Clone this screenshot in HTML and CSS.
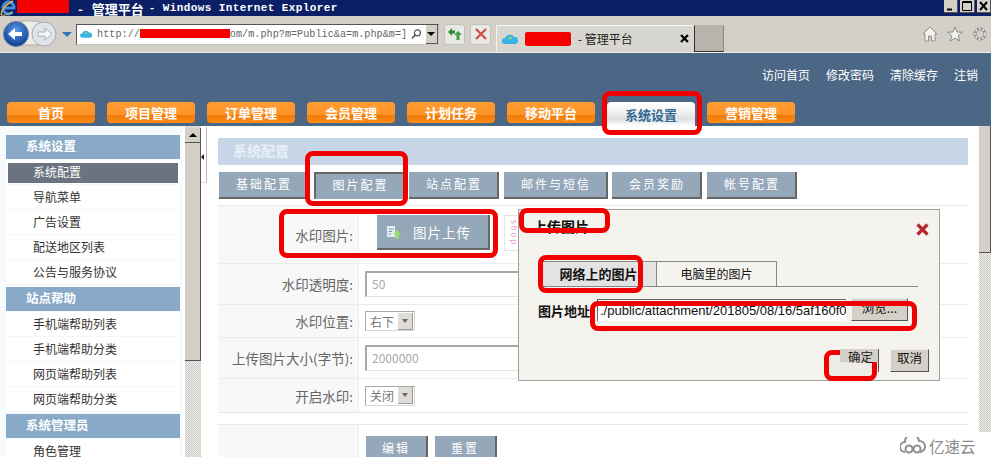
FILE: index.html
```html
<!DOCTYPE html>
<html lang="zh">
<head>
    <meta charset="UTF-8">
    <title>管理平台 - Windows Internet Explorer</title>
    <link rel="stylesheet" href="styles.css">
</head>
<body>
    <div class="titlebar">
        <svg class="ie-logo" width="17" height="16" viewBox="0 0 17 16">
            <path d="M3.5 8 H14 A5.5 6 0 1 0 12.5 12" fill="none" stroke="#3f8fdc" stroke-width="3"/>
            <path d="M1 15 C1 10 6 4 13 1" fill="none" stroke="#e8b23a" stroke-width="1.4"/>
            <path d="M1 15 C4 16 9 14 13 12" fill="none" stroke="#e8c35a"/>
        </svg>
        <span class="redact redact-title"></span>
        <span class="title-cn">-   管理平台</span>
        <span class="title-en">- Windows Internet Explorer</span>
        <div class="win-buttons">
            <span class="win-btn">
                <svg width="13" height="12" viewBox="0 0 13 12"><path d="M3 9.5 H8" stroke="#000" stroke-width="2"/></svg>
            </span>
            <span class="win-btn">
                <svg width="14" height="12" viewBox="0 0 14 12"><path d="M2.5 1.5 H11.5 V10.5 H2.5 Z M2.5 2.5 H11.5" fill="none" stroke="#000"/></svg>
            </span>
            <span class="win-btn">
                <svg width="13" height="12" viewBox="0 0 13 12"><path d="M3 2 L10 10 M10 2 L3 10" stroke="#000" stroke-width="2"/></svg>
            </span>
        </div>
    </div>

    <div class="toolbar">
        <svg class="nav-circles" width="72" height="28" viewBox="0 0 72 28">
            <defs>
                <radialGradient id="backFill" cx="50%" cy="35%" r="65%">
                    <stop offset="0" stop-color="#5b9be8"/>
                    <stop offset="1" stop-color="#0c3a95"/>
                </radialGradient>
            </defs>
            <path d="M14 3 C24 -1 34 1 42 3 L42 25 L14 25 Z" fill="#ecebe6" stroke="#a9a9a9"/>
            <circle cx="14" cy="14" r="12.5" fill="url(#backFill)" stroke="#6d7f95"/>
            <path d="M20 12 H13 V8 L6 14 L13 20 V16 H20 Z" fill="#fff"/>
            <circle cx="42" cy="14" r="12" fill="#dfe3ea" stroke="#a4a9b3"/>
            <path d="M36 12 H43 V8 L50 14 L43 20 V16 H36 Z" fill="#f6f7f9" stroke="#9aa3b2" stroke-width=".8"/>
            <path d="M60 12 H70 L65 17 Z" fill="#2f78b8"/>
        </svg>
        <div class="addressbar">
            <svg class="cloud" width="16" height="12" viewBox="0 0 16 12">
                <path d="M3 11 A3 3 0 0 1 3 5 A5 5 0 0 1 12 4 A3.5 3.5 0 0 1 13 11 Z" fill="#35b4e6"/>
                <path d="M6 6 L8 3 L10 6 Z" fill="#b7d63c"/>
            </svg>
            <span class="url">http://<span class="redact redact-url"></span>om/m.php?m=Public&amp;a=m.php&amp;m=]</span>
            <svg class="lens" width="14" height="14" viewBox="0 0 14 14">
                <circle cx="8.5" cy="5.5" r="4" fill="none" stroke="#555" stroke-width="1.6"/>
                <path d="M5.5 8.5 L1.5 12.5" stroke="#555" stroke-width="2"/>
            </svg>
            <span class="drop-btn"><span class="arrow-down"></span></span>
        </div>
        <span class="tool-btn">
            <svg width="16" height="14" viewBox="0 0 16 14">
                <path d="M1 5 L5 1 L5 3.5 L8 3.5 L8 6.5 L5 6.5 L5 9 Z" fill="#2f8a3a"/>
                <path d="M15 8 L11 4 L7 8 H9.5 V13 H12.5 V8 Z" fill="#3da046"/>
            </svg>
        </span>
        <span class="tool-btn">
            <svg width="12" height="12" viewBox="0 0 12 12">
                <path d="M1 1 L11 11 M11 1 L1 11" stroke="#c9504a" stroke-width="2.2"/>
            </svg>
        </span>
        <div class="tab">
            <svg width="16" height="12" viewBox="0 0 16 12">
                <path d="M3 11 A3 3 0 0 1 3 5 A5 5 0 0 1 12 4 A3.5 3.5 0 0 1 13 11 Z" fill="#35b4e6"/>
                <path d="M6 6 L8 3 L10 6 Z" fill="#b7d63c"/>
            </svg>
            <span class="redact redact-tab"></span>
            <span class="tab-title">- 管理平台</span>
            <svg class="tab-close" width="9" height="9" viewBox="0 0 9 9">
                <path d="M1 1 L8 8 M8 1 L1 8" stroke="#000" stroke-width="2.2"/>
            </svg>
        </div>
        <span class="new-tab"></span>
        <div class="tool-icons">
            <svg width="16" height="16" viewBox="0 0 16 16">
                <path d="M8 1 L15 8 H13 V15 H9.5 V10 H6.5 V15 H3 V8 H1 Z" fill="#f3f3f0" stroke="#8c8c88"/>
            </svg>
            <svg width="16" height="16" viewBox="0 0 16 16">
                <path d="M8 1 L10 6 L15.5 6.2 L11.2 9.5 L12.7 15 L8 12 L3.3 15 L4.8 9.5 L.5 6.2 L6 6 Z" fill="#f3f3f0" stroke="#8c8c88"/>
            </svg>
            <svg width="16" height="16" viewBox="0 0 16 16">
                <circle cx="8" cy="8" r="5" fill="none" stroke="#8c8c88" stroke-width="3"/>
                <circle cx="8" cy="8" r="5" fill="none" stroke="#f3f3f0" stroke-width="1.4" stroke-dasharray="2 1.6"/>
            </svg>
        </div>
    </div>

    <header class="app-header">
        <div class="top-links">
            <a>访问首页</a>
            <a>修改密码</a>
            <a>清除缓存</a>
            <a>注销</a>
        </div>
        <nav class="main-nav">
            <a class="nav-item">首页</a>
            <a class="nav-item">项目管理</a>
            <a class="nav-item">订单管理</a>
            <a class="nav-item">会员管理</a>
            <a class="nav-item">计划任务</a>
            <a class="nav-item">移动平台</a>
            <a class="nav-item nav-active">系统设置</a>
            <a class="nav-item">营销管理</a>
        </nav>
    </header>

    <div class="main">
        <aside class="sidebar">
            <div class="side-head">系统设置</div>
            <ul class="side-list">
                <li class="side-active"><span>系统配置</span></li>
                <li><span>导航菜单</span></li>
                <li><span>广告设置</span></li>
                <li><span>配送地区列表</span></li>
                <li><span>公告与服务协议</span></li>
            </ul>
            <div class="side-head">站点帮助</div>
            <ul class="side-list">
                <li><span>手机端帮助列表</span></li>
                <li><span>手机端帮助分类</span></li>
                <li><span>网页端帮助列表</span></li>
                <li><span>网页端帮助分类</span></li>
            </ul>
            <div class="side-head">系统管理员</div>
            <ul class="side-list">
                <li><span>角色管理</span></li>
            </ul>
        </aside>

        <div class="scrollbar side-scroll">
            <span class="scroll-up"><span class="arrow-up"></span></span>
            <span class="scroll-thumb"></span>
        </div>
        <div class="splitter"><span class="arrow-left"></span></div>

        <section class="content">
            <h2 class="page-title">系统配置</h2>
            <div class="cfg-tabs">
                <a class="cfg-tab">基础配置</a>
                <a class="cfg-tab cfg-current">图片配置</a>
                <a class="cfg-tab">站点配置</a>
                <a class="cfg-tab cfg-wide">邮件与短信</a>
                <a class="cfg-tab">会员奖励</a>
                <a class="cfg-tab">帐号配置</a>
            </div>

            <div class="form-table">
                <div class="form-row row-upload">
                    <label class="form-label">水印图片:</label>
                    <div class="form-field">
                        <span class="upload-btn">
                            <svg width="16" height="16" viewBox="0 0 16 16">
                                <path d="M1 2 H9 V13 H1 Z" fill="#e8eef5"/>
                                <path d="M2.5 5 H7.5 M2.5 7.5 H6 M2.5 10 H5" stroke="#7d93a8"/>
                                <path d="M11 6 L15 10.5 H12.6 V15 H9.4 V10.5 H7 Z" fill="#9be36a"/>
                            </svg>
                            图片上传
                        </span>
                        <span class="thumb">shop</span>
                    </div>
                </div>
                <div class="form-row row-tall">
                    <label class="form-label">水印透明度:</label>
                    <div class="form-field"><span class="text-input">50</span></div>
                </div>
                <div class="form-row row-short">
                    <label class="form-label">水印位置:</label>
                    <div class="form-field"><span class="fake-select">右下<i class="select-btn"><b class="arrow-small"></b></i></span></div>
                </div>
                <div class="form-row row-tall">
                    <label class="form-label">上传图片大小(字节):</label>
                    <div class="form-field"><span class="text-input">2000000</span></div>
                </div>
                <div class="form-row row-short">
                    <label class="form-label">开启水印:</label>
                    <div class="form-field"><span class="fake-select">关闭<i class="select-btn"><b class="arrow-small"></b></i></span></div>
                </div>
            </div>

            <div class="form-table form-actions">
                <div class="form-row">
                    <label class="form-label"></label>
                    <div class="form-field action-field">
                        <a class="action-btn">编辑</a>
                        <a class="action-btn">重置</a>
                    </div>
                </div>
            </div>
        </section>

        <div class="scrollbar page-scroll">
            <span class="scroll-thumb"></span>
        </div>
    </div>

    <div class="logo-mark">
        <svg width="26" height="18" viewBox="0 0 26 18">
            <path d="M5 15 A5 5 0 0 1 5 5 A7 7 0 0 1 19 4 A5.5 5.5 0 0 1 20 15" fill="none" stroke="#8f8f8f" stroke-width="2"/>
            <circle cx="9" cy="12" r="3.5" fill="none" stroke="#8f8f8f" stroke-width="2"/>
            <circle cx="17" cy="12" r="3.5" fill="none" stroke="#8f8f8f" stroke-width="2"/>
        </svg>
        <span>亿速云</span>
    </div>

    <div class="modal">
        <div class="modal-head">
            <strong>上传图片</strong>
            <svg width="13" height="13" viewBox="0 0 13 13">
                <path d="M1.5 1.5 L11.5 11.5 M11.5 1.5 L1.5 11.5" stroke="#b8272c" stroke-width="3.2"/>
            </svg>
        </div>
        <div class="modal-tabs">
            <span class="modal-tab modal-tab-on">网络上的图片</span>
            <span class="modal-tab">电脑里的图片</span>
        </div>
        <div class="modal-row">
            <strong class="modal-label">图片地址</strong>
            <span class="path-input">./public/attachment/201805/08/16/5af160f0</span>
            <span class="gray-btn browse-btn">浏览...</span>
        </div>
        <div class="modal-foot">
            <span class="gray-btn ok-btn">确定</span>
            <span class="gray-btn">取消</span>
        </div>
    </div>

    <!-- red marks drawn on the screenshot -->
    <span class="mark mark-nav"></span>
    <span class="mark mark-tab"></span>
    <span class="mark mark-upload"></span>
    <span class="mark mark-title"></span>
    <span class="mark mark-net"></span>
    <span class="mark mark-path"></span>
    <span class="mark mark-ok"></span>
</body>
</html>
```

FILE: styles.css
```css
* {
    box-sizing: border-box;
}
body {
    position: relative;
    width: 991px;
    height: 457px;
    margin: 0;
    overflow: hidden;
    background-color: #fff;
    font-family: "Noto Sans CJK SC", "Liberation Sans", sans-serif;
    font-size: 13px;
    color: #333;
}
a {
    text-decoration: none;
}
ul {
    list-style: none;
    margin: 0;
    padding: 0;
}
.redact {
    display: inline-block;
    background-color: #f60000;
}

/* browser chrome */
.titlebar {
    display: flex;
    align-items: center;
    height: 16px;
    background-color: #0a1f66;
    color: #fff;
    font-weight: bold;
}
.ie-logo {
    flex: none;
}
.redact-title {
    width: 52px;
    height: 13px;
    margin-top: -3px;
}
.title-cn {
    margin-left: 9px;
    font-size: 13px;
    line-height: 15px;
    white-space: pre;
}
.title-en {
    margin-left: 5px;
    font-family: "Liberation Mono", monospace;
    font-size: 11px;
    letter-spacing: 0.4px;
}
.win-buttons {
    display: flex;
    gap: 2px;
    margin-left: auto;
    margin-top: -3px;
}
.win-btn {
    display: flex;
    height: 13px;
    background-color: #d4d0c8;
    border-right: 1px solid #555;
    border-bottom: 1px solid #555;
}
.toolbar {
    display: flex;
    align-items: center;
    height: 37px;
    background-color: #d4d0c8;
    border-bottom: 1px solid #f0efec;
    padding-left: 2px;
}
.nav-circles {
    flex: none;
}
.addressbar {
    display: flex;
    align-items: center;
    width: 363px;
    height: 21px;
    margin-left: 2px;
    background-color: #fff;
    border: 1px solid #555;
    border-right-color: #c8c8c8;
    border-bottom-color: #c8c8c8;
    padding-left: 3px;
}
.url {
    margin-left: 5px;
    font-family: "Liberation Mono", monospace;
    font-size: 10.2px;
    color: #666;
    white-space: nowrap;
}
.redact-url {
    width: 90px;
    height: 9px;
    vertical-align: -1px;
}
.lens {
    margin-left: 4px;
}
.drop-btn {
    display: flex;
    align-items: center;
    justify-content: center;
    width: 16px;
    height: 19px;
    margin-left: 4px;
    background-color: #d4d0c8;
    border-right: 1px solid #555;
    border-bottom: 1px solid #555;
}
.arrow-down {
    border: 4px solid transparent;
    border-top: 4px solid #000;
    border-bottom: 0;
}
.tool-btn {
    display: flex;
    align-items: center;
    justify-content: center;
    flex: none;
    width: 21px;
    height: 21px;
    margin-left: 5px;
    background-color: #e8e8e4;
    border: 1px solid #c2c2bc;
    border-radius: 3px;
}
.tab {
    display: flex;
    align-items: center;
    width: 198px;
    height: 26px;
    margin-left: 5px;
    margin-top: 8px;
    padding-left: 5px;
    background-color: #d8d6d0;
    border-left: 1px solid #f4f4f2;
    border-top: 1px solid #f4f4f2;
}
.redact-tab {
    width: 46px;
    height: 14px;
    margin-left: 7px;
    border-radius: 2px;
}
.tab-title {
    margin-left: 7px;
    margin-top: -1px;
    font-size: 12px;
    color: #222;
}
.tab-close {
    margin-left: auto;
    margin-right: 5px;
}
.new-tab {
    width: 30px;
    height: 27px;
    margin-top: 8px;
    background-color: #b8b4ac;
    border: 1px solid #333;
    border-top-color: #b8b4ac;
    border-right-color: #888;
}
.tool-icons {
    display: flex;
    gap: 9px;
    margin-left: auto;
    margin-right: 3px;
}

/* app header */
.app-header {
    height: 73px;
    background-color: #4b6785;
    padding-top: 11px;
}
.top-links {
    display: flex;
    justify-content: flex-end;
    gap: 16px;
    height: 38px;
    padding-right: 13px;
}
.top-links a {
    color: #fff;
    font-size: 12px;
    line-height: 22px;
}
.main-nav {
    display: flex;
    gap: 12px;
    padding-left: 7px;
}
.nav-item {
    width: 88px;
    height: 21px;
    background: linear-gradient(#ff9c33 0, #ff9428 60%, #f07a08 62%, #ff8a14 100%);
    border-radius: 4px;
    color: #fff;
    font-size: 13px;
    font-weight: bold;
    line-height: 21px;
    text-align: center;
}
.nav-active {
    height: 24px;
    background: linear-gradient(#fff 0, #f2f2f2 40%, #dfdfdf 70%, #fff 100%);
    border-radius: 4px 4px 0 0;
    color: #2f6a94;
    line-height: 25px;
}

/* page body */
.main {
    display: flex;
    height: 331px;
    background-color: #fff;
}
.sidebar {
    flex: none;
    width: 183px;
    padding: 9px 3px 0 6px;
    overflow: hidden;
    background-color: #f7fbfe;
}
.side-head {
    height: 24px;
    padding-left: 20px;
    background-color: #88aac8;
    color: #fff;
    font-size: 12.5px;
    font-weight: bold;
    line-height: 21px;
}
.side-list {
    margin: 1px 0 2px;
    background-color: #fff;
}
.side-list li {
    height: 25px;
    padding: 3px 2px 2px;
    border-bottom: 1px solid #f6f6f6;
    font-size: 12px;
    line-height: 18px;
    color: #333;
}
.side-list span {
    display: block;
    height: 20px;
    padding-left: 25px;
}
.side-active span {
    background-color: #6b7280;
    color: #fff;
}
.scrollbar {
    flex: none;
    width: 16px;
    background-color: #e4e2dc;
    background-image: repeating-conic-gradient(#c8c6c0 0 25%, #f2f1ed 0 50%);
    background-size: 2px 2px;
}
.side-scroll {
    margin-left: 2px;
    padding-top: 2px;
}
.scroll-up {
    display: flex;
    align-items: center;
    justify-content: center;
    height: 15px;
    background-color: #d4d0c8;
    border-right: 1px solid #555;
    border-bottom: 1px solid #555;
}
.arrow-up {
    border: 4px solid transparent;
    border-bottom: 4px solid #000;
    border-top: 0;
}
.scroll-thumb {
    display: block;
    height: 218px;
    background-color: #d4d0c8;
    border-right: 1px solid #555;
    border-bottom: 1px solid #555;
}
.splitter {
    flex: none;
    width: 6px;
    height: 56px;
    margin-top: 1px;
    border-right: 1px solid #bbb;
    border-bottom: 1px solid #ddd;
    padding-top: 27px;
}
.arrow-left {
    display: block;
    width: 0;
    border: 3px solid transparent;
    border-right: 3px solid #222;
    border-left: 0;
}
.content {
    flex: none;
    width: 761px;
    padding: 12px 0 0 11px;
}
.page-title {
    height: 27px;
    margin: 0;
    padding-left: 15px;
    background-color: #c6d6e7;
    color: #e9eff5;
    font-size: 14px;
    font-weight: bold;
    line-height: 25px;
}
.cfg-tabs {
    display: flex;
    gap: 5px;
    margin: 7px 0 6px;
    padding-left: 1px;
}
.cfg-tab {
    width: 90px;
    height: 27px;
    padding-left: 2px;
    background-color: #94a8ba;
    border-right: 2px solid #666;
    border-bottom: 2px solid #666;
    color: #fff;
    font-size: 12px;
    letter-spacing: 2px;
    line-height: 23px;
    text-align: center;
}
.cfg-current {
    border: 1px solid #666;
    border-left-width: 2px;
    border-top-width: 2px;
    border-bottom-color: #94a8ba;
    border-right-color: #94a8ba;
    line-height: 21px;
}
.cfg-wide {
    width: 104px;
    margin-right: -1px;
}
.form-table {
    border-top: 1px solid #e8e8e8;
    border-bottom: 1px solid #e8e8e8;
}
.form-row {
    display: flex;
    border-bottom: 1px solid #ececec;
}
.form-table .form-row:last-child {
    border-bottom: 0;
}
.row-upload {
    height: 58px;
}
.row-tall {
    height: 41px;
}
.row-short {
    height: 33px;
}
.form-label {
    display: flex;
    align-items: center;
    justify-content: flex-end;
    align-self: stretch;
    flex: none;
    width: 141px;
    padding-right: 5px;
    background-color: #f8f8f8;
    border-right: 1px solid #ececec;
    color: #666;
    font-size: 13.5px;
    white-space: nowrap;
}
.form-field {
    display: flex;
    align-items: center;
    flex: 1;
    padding-left: 6px;
}
.upload-btn {
    display: flex;
    align-items: center;
    gap: 11px;
    width: 113px;
    height: 35px;
    margin-top: -4px;
    margin-left: 12px;
    padding-left: 9px;
    background-color: #94a8ba;
    border-right: 2px solid #666;
    border-bottom: 2px solid #666;
    color: #fff;
    font-size: 13.5px;
    letter-spacing: 1px;
}
.thumb {
    width: 60px;
    height: 36px;
    margin-top: -4px;
    margin-left: 14px;
    padding-top: 4px;
    padding-right: 45px;
    background-color: #fff;
    border: 1px solid #e4e4e4;
    color: #e79ccb;
    font-size: 8px;
    letter-spacing: 2px;
    line-height: 8px;
    writing-mode: vertical-rl;
}
.text-input {
    width: 300px;
    height: 26px;
    padding-left: 5px;
    background-color: #fff;
    border: 1px solid #e4e4e4;
    border-left: 2px solid #a8a8a8;
    border-top: 2px solid #a8a8a8;
    color: #aaa;
    font-size: 12px;
    line-height: 22px;
}
.fake-select {
    display: flex;
    align-items: center;
    justify-content: space-between;
    width: 50px;
    height: 20px;
    padding: 0 1px 0 4px;
    background-color: #fff;
    border: 1px solid #d8d8d8;
    border-left: 1px solid #aaa;
    border-top: 1px solid #aaa;
    color: #777;
    font-size: 12px;
}
.select-btn {
    display: flex;
    align-items: center;
    justify-content: center;
    width: 15px;
    height: 17px;
    background-color: #dedcd4;
    border-right: 1px solid #999;
    border-bottom: 1px solid #999;
}
.arrow-small {
    border: 3px solid transparent;
    border-top: 4px solid #666;
    border-bottom: 0;
}
.form-actions {
    height: 40px;
    margin-top: 11px;
}
.form-actions .form-row {
    height: 40px;
}
.action-field {
    align-items: flex-start;
    gap: 7px;
    padding-top: 11px;
    padding-left: 7px;
}
.action-btn {
    width: 62px;
    height: 26px;
    background-color: #94a8ba;
    border-right: 2px solid #666;
    color: #fff;
    font-size: 12px;
    letter-spacing: 2px;
    line-height: 24px;
    text-align: center;
}
.page-scroll {
    width: 12px;
    height: 306px;
    margin-left: 11px;
}
.page-scroll .scroll-thumb {
    height: 127px;
}

/* watermark */
.logo-mark {
    position: absolute;
    left: 900px;
    top: 435px;
    display: flex;
    align-items: center;
    gap: 3px;
    width: 91px;
    height: 22px;
    background-color: #fff;
    color: #8a8a8a;
    font-size: 15.5px;
}

/* upload dialog */
.modal {
    position: absolute;
    left: 518px;
    top: 209px;
    width: 422px;
    height: 172px;
    padding: 0 10px 0 20px;
    background-color: #f5f3ee;
    border: 1px solid #a0a0a0;
    color: #111;
}
.modal-head {
    display: flex;
    justify-content: space-between;
    align-items: center;
    height: 38px;
    font-size: 14px;
}
.modal-head strong {
    margin-top: -6px;
    margin-left: -6px;
}
.modal-tabs {
    display: flex;
    width: 379px;
    height: 26px;
    margin-top: 13px;
    padding-left: 2px;
    border-bottom: 1px solid #888;
}
.modal-tab {
    width: 120px;
    border: 1px solid #888;
    border-left: 0;
    border-bottom: 0;
    font-size: 12px;
    line-height: 24px;
    text-align: center;
}
.modal-tab-on {
    width: 116px;
    background-color: #e3e3e3;
    font-size: 13px;
    font-weight: bold;
}
.modal-row {
    display: flex;
    align-items: flex-start;
    margin-top: 11px;
    margin-left: -1px;
}
.modal-label {
    width: 59px;
    font-size: 13px;
    line-height: 26px;
    white-space: nowrap;
}
.path-input {
    width: 249px;
    height: 22px;
    margin-top: 1px;
    padding-left: 2px;
    overflow: hidden;
    background-color: #fff;
    border-top: 1px solid #666;
    border-left: 1px solid #666;
    font-family: "Liberation Sans", sans-serif;
    font-size: 13px;
    line-height: 21px;
    white-space: nowrap;
}
.gray-btn {
    height: 23px;
    background-color: #d4d0c8;
    border-right: 1px solid #555;
    border-bottom: 1px solid #555;
    border-top: 1px solid #efefef;
    border-left: 1px solid #efefef;
    font-size: 12.5px;
    line-height: 15px;
    text-align: center;
}
.browse-btn {
    width: 57px;
    margin-left: 5px;
    line-height: 17px;
}
.modal-foot {
    display: flex;
    justify-content: flex-end;
    gap: 11px;
    margin-top: 25px;
}
.modal-foot .gray-btn {
    width: 39px;
}
/* top of this button shows above the red mark */
.modal-foot .ok-btn {
    position: relative;
    z-index: 2;
    padding-left: 3px;
    background: linear-gradient(#d4d0c8 13px, transparent 13px);
    border-left: 0;
    border-top: 0;
    border-bottom: 0;
    color: #222;
}

/* annotations */
.mark {
    position: absolute;
    border: 5px solid #f00000;
    border-radius: 8px;
}
.mark-nav {
    left: 602px;
    top: 91px;
    width: 100px;
    height: 44px;
}
.mark-tab {
    left: 305px;
    top: 151px;
    width: 103px;
    height: 55px;
}
.mark-upload {
    left: 279px;
    top: 209px;
    width: 219px;
    height: 49px;
}
.mark-title {
    left: 519px;
    top: 208px;
    width: 91px;
    height: 25px;
}
.mark-net {
    left: 538px;
    top: 255px;
    width: 105px;
    height: 38px;
}
.mark-path {
    left: 590px;
    top: 301px;
    width: 327px;
    height: 30px;
}
.mark-ok {
    left: 824px;
    top: 350px;
    width: 53px;
    height: 31px;
    background-color: #eeece6;
}
```
